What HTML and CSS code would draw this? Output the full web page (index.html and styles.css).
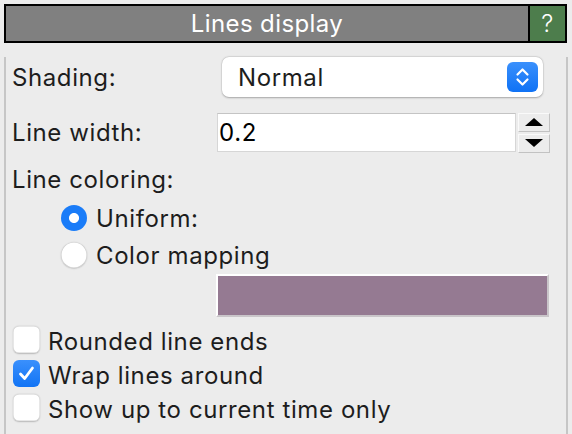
FILE: index.html
```html
<!DOCTYPE html>
<html lang="en">
<head>
<meta charset="utf-8">
<title>Lines display</title>
<link rel="stylesheet" href="styles.css">
</head>
<body>
<div class="panel">
  <div class="header">
    <div class="title">Lines display</div>
    <div class="help">?</div>
  </div>
  <div class="frame">
    <div class="row row-shading">
      <span class="label">Shading:</span>
      <div class="popup">
        <span class="popup-text">Normal</span>
        <span class="popup-btn">
          <svg width="31" height="30" viewBox="0 0 31 30"><path d="M10.5 12.5 L15.5 7.5 L20.5 12.5" fill="none" stroke="#fff" stroke-width="2.2" stroke-linecap="round" stroke-linejoin="round"/><path d="M10.5 17.5 L15.5 22.5 L20.5 17.5" fill="none" stroke="#fff" stroke-width="2.2" stroke-linecap="round" stroke-linejoin="round"/></svg>
        </span>
      </div>
    </div>
    <div class="row row-width">
      <span class="label">Line width:</span>
      <div class="field">0.2</div>
      <div class="spinner">
        <div class="spin-btn spin-up"><svg width="18" height="8" viewBox="0 0 18 8"><path d="M0 8 L9 0 L18 8 Z" fill="#000"/></svg></div>
        <div class="spin-btn spin-down"><svg width="18" height="8" viewBox="0 0 18 8"><path d="M0 0 L18 0 L9 8 Z" fill="#000"/></svg></div>
      </div>
    </div>
    <div class="row row-coloring"><span class="label">Line coloring:</span></div>
    <div class="row radio-row radio-first">
      <span class="radio checked"></span>
      <span class="label">Uniform:</span>
    </div>
    <div class="row radio-row">
      <span class="radio"></span>
      <span class="label">Color mapping</span>
    </div>
    <div class="swatch-row"><div class="swatch"></div></div>
    <div class="row check-row check-first">
      <span class="check"></span>
      <span class="label">Rounded line ends</span>
    </div>
    <div class="row check-row">
      <span class="check checked"><svg width="27" height="27" viewBox="0 0 27 27"><path d="M7.5 14 L11.7 18.5 L19.5 8" fill="none" stroke="#fff" stroke-width="2.8" stroke-linecap="round" stroke-linejoin="round"/></svg></span>
      <span class="label">Wrap lines around</span>
    </div>
    <div class="row check-row">
      <span class="check"></span>
      <span class="label">Show up to current time only</span>
    </div>
  </div>
</div>
</body>
</html>
```

FILE: styles.css
```css
* { box-sizing: border-box; }
html, body { margin: 0; padding: 0; }
body {
  background: #ececec;
  font-family: "Inter", "Noto Sans", "Liberation Sans", sans-serif;
  font-size: 24px;
  letter-spacing: 0.6px;
  color: #1d1d1d;
  width: 572px;
  height: 434px;
  overflow: hidden;
}
.panel {
  margin: 4px 0 0 4px;
  width: 564px;
}
.header {
  display: flex;
  height: 39px;
  width: 563px;
  border: 2px solid #000;
}
.title {
  flex: 1;
  background: #808080;
  color: #fff;
  text-align: center;
  line-height: 36px;
  letter-spacing: 0.4px;
}
.help {
  width: 37px;
  border-left: 2px solid #000;
  background: #4d7d4c;
  color: #fff;
  text-align: center;
  line-height: 36px;
  font-weight: 300;
}
.frame {
  height: 385px;
  border: 2px solid #c6c6c6;
  border-top: none;
  padding: 0 0 0 6px;
}
.row {
  display: flex;
  align-items: center;
}
.label { line-height: 27px; white-space: nowrap; }
.row-shading { margin-top: 14px; height: 40px; }
.row-shading .label { width: 210px; }
.popup {
  width: 321px;
  height: 40px;
  background: #fff;
  border-radius: 7px;
  box-shadow: 0 0.5px 2px rgba(0,0,0,0.28), 0 0 0 0.5px rgba(0,0,0,0.06);
  display: flex;
  align-items: center;
  padding: 0 5px 0 16px;
}
.popup-text { flex: 1; }
.popup-btn {
  width: 31px;
  height: 30px;
  border-radius: 6px;
  background: linear-gradient(#3a90fc, #0f72f5);
  display: flex;
}
.row-width { margin-top: 16px; height: 39px; }
.row-width .label { width: 205px; }
.field {
  width: 299px;
  height: 39px;
  background: #fff;
  border: 1px solid #d6d6d6;
  border-top-color: #c4c4c4;
  padding-left: 1px;
  line-height: 37px;
  color: #000;
}
.spinner {
  margin-left: 2px;
  width: 32px;
  display: flex;
  flex-direction: column;
  gap: 2px;
}
.spin-btn {
  height: 19px;
  background: #ececec;
  border: 1px solid;
  border-color: #fafafa #c2c2c2 #c2c2c2 #fafafa;
  display: flex;
  align-items: center;
  justify-content: center;
}
.row-coloring { margin-top: 14px; height: 27px; }
.radio-row { height: 26px; padding-left: 49px; gap: 9px; }
.radio-first { margin-top: 12px; }
.radio-row + .radio-row { margin-top: 11px; }
.radio {
  width: 26px;
  height: 26px;
  border-radius: 50%;
  background: #fff;
  box-shadow: inset 0 0 0 0.5px #c9c9c9, 0 0.5px 1.5px rgba(0,0,0,0.25);
  flex: none;
}
.radio.checked {
  background: radial-gradient(circle, #fff 0 4.6px, #1a7cf8 5.4px);
  box-shadow: none;
}
.swatch-row { padding-left: 204px; margin-top: 6px; }
.swatch {
  width: 333px;
  height: 43px;
  background: #957a92;
  border: 2px solid;
  border-color: #fff #c9c5c9 #c9c5c9 #fff;
}
.check-row { height: 27px; gap: 8px; padding-left: 1px; }
.check-row .label { padding-top: 4px; }
.check-first { margin-top: 9px; }
.check-row + .check-row { margin-top: 7px; }
.check {
  width: 27px;
  height: 27px;
  border-radius: 6px;
  background: #fff;
  box-shadow: inset 0 0 0 0.5px #cfcfcf, 0 0.5px 1.5px rgba(0,0,0,0.22);
  flex: none;
  display: flex;
}
.check.checked {
  background: linear-gradient(#3a90fc, #1274f5);
  box-shadow: none;
}
```
